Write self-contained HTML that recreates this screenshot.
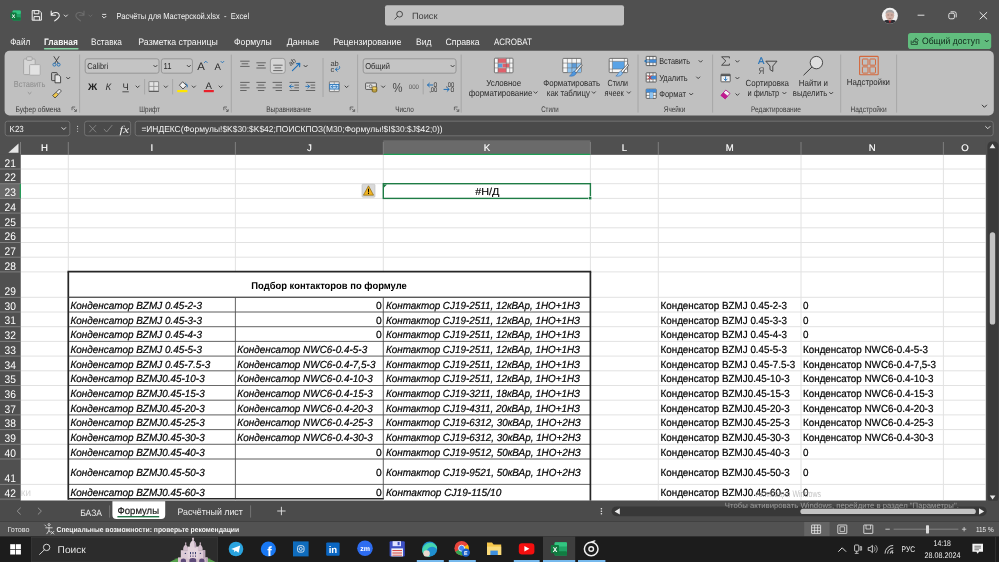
<!DOCTYPE html>
<html lang="ru">
<head>
<meta charset="utf-8">
<title>Расчёты для Мастерской.xlsx - Excel</title>
<style>
html,body{margin:0;padding:0;background:#505050;overflow:hidden}
#app{position:relative;width:999px;height:562px;overflow:hidden;font-family:'Liberation Sans', sans-serif}
svg{display:block;font-family:'Liberation Sans', sans-serif;will-change:transform}
text{white-space:pre;text-rendering:geometricPrecision}
</style>
</head>
<body>
<div id="app">
<svg width="999" height="562" viewBox="0 0 999 562">
<g id="backgrounds">
<rect x="0" y="0" width="999" height="562" fill="#505050"/>
</g>
<g id="titlebar">
<rect x="12.6" y="10.6" width="8.2" height="10" fill="#21a366" rx="1"/>
<rect x="12.6" y="10.6" width="8.2" height="3.4" fill="#33c481" rx="1"/>
<rect x="12.6" y="17.2" width="8.2" height="3.4" fill="#107c41" rx="1"/>
<rect x="10.3" y="12.6" width="6.3" height="6.3" fill="#0f7a3f" rx="0.8"/>
<text x="13.45" y="17.9" font-size="5.2" fill="#fff" font-weight="bold" text-anchor="middle">X</text>
<path d="M32.2 10.6 h7.0 l2.2 2.2 v7.4 h-9.2 Z M34.2 10.6 v3.2 h4.6 v-3.2 M34.0 20.2 v-3.6 h5.6 v3.6" fill="none" stroke="#f2f2f2" stroke-width="1.0" stroke-linejoin="round"/>
<path d="M51.2 11.0 v4.3 h4.3 M51.4 15.1 c1.4 -3.4 7.6 -3.6 7.9 0.6 c0.1 2.0 -2.2 3.4 -4.6 5.2" fill="none" stroke="#f2f2f2" stroke-width="1.05" stroke-linecap="round" stroke-linejoin="round"/>
<path d="M64.2 15.0 l1.6 1.6 l1.6 -1.6" fill="none" stroke="#f2f2f2" stroke-width="0.9" stroke-linecap="round" stroke-linejoin="round"/>
<path d="M84.0 11.0 v4.3 h-4.3 M83.8 15.1 c-1.4 -3.4 -7.6 -3.6 -7.9 0.6 c-0.1 2.0 2.2 3.4 4.6 5.2" fill="none" stroke="#6d6d6d" stroke-width="1.05" stroke-linecap="round" stroke-linejoin="round"/>
<path d="M88.8 15.0 l1.6 1.6 l1.6 -1.6" fill="none" stroke="#6d6d6d" stroke-width="0.9" stroke-linecap="round" stroke-linejoin="round"/>
<line x1="102.2" y1="14.4" x2="106.2" y2="14.4" stroke="#f2f2f2" stroke-width="0.9"/>
<path d="M102.4 16.3 l1.8 1.8 l1.8 -1.8" fill="none" stroke="#f2f2f2" stroke-width="0.9" stroke-linecap="round" stroke-linejoin="round"/>
<text x="116.6" y="18.9" font-size="8.6" fill="#f4f4f4" textLength="132.5" lengthAdjust="spacingAndGlyphs">Расчёты для Мастерской.xlsx  -  Excel</text>
<rect x="385" y="5.2" width="239" height="20.4" fill="#c0c0c0" rx="2"/>
<circle cx="399.6" cy="14.2" r="2.9" fill="none" stroke="#3c3c3c" stroke-width="0.9"/>
<line x1="397.5" y1="16.4" x2="394.8" y2="19.2" stroke="#3c3c3c" stroke-width="0.9" stroke-linecap="round"/>
<text x="411.9" y="18.6" font-size="9.0" fill="#404040" textLength="25.6" lengthAdjust="spacingAndGlyphs">Поиск</text>
<circle cx="889.9" cy="15.8" r="8.0" fill="#f1f1f1"/>
<clipPath id="avc"><circle cx="889.9" cy="15.8" r="8.0"/></clipPath>
<g clip-path="url(#avc)"><path d="M882 25 c0.4 -4.6 3.4 -5.2 7.9 -5.2 c4.5 0 7.5 0.6 7.9 5.2 Z" fill="#2e2e34"/><path d="M888.6 20.4 l1.3 3.4 l1.3 -3.4 Z" fill="#b3262e"/><ellipse cx="889.9" cy="15.2" rx="4.3" ry="5.2" fill="#cfaea3"/><path d="M885.5 14.0 c-0.2 -5.6 9.0 -5.6 8.8 0 c-1.6 -2.4 -7.2 -2.4 -8.8 0Z" fill="#a9a6a6"/><path d="M887.4 15.0 h1.8 M890.8 15.0 h1.8 M888.6 18.4 h2.6" stroke="#7d5f58" stroke-width="0.6" fill="none"/></g>
<line x1="917.6" y1="15.2" x2="924.4" y2="15.2" stroke="#f2f2f2" stroke-width="0.9"/>
<rect x="948.8" y="13.2" width="5.6" height="5.6" fill="none" rx="1.4" stroke="#f2f2f2" stroke-width="0.9"/>
<path d="M950.6 11.8 h3.8 a1.8 1.8 0 0 1 1.8 1.8 v3.8" fill="none" stroke="#f2f2f2" stroke-width="0.9" />
<path d="M980.0 12.4 l6.8 6.6 M986.8 12.4 l-6.8 6.6" fill="none" stroke="#f2f2f2" stroke-width="0.95" stroke-linecap="round"/>
</g>
<g id="tabs">
<text x="10.2" y="45.2" font-size="9.3" fill="#f6f6f6" textLength="20.0" lengthAdjust="spacingAndGlyphs">Файл</text>
<text x="43.9" y="45.2" font-size="9.3" fill="#f6f6f6" font-weight="bold" textLength="33.9" lengthAdjust="spacingAndGlyphs">Главная</text>
<text x="91.1" y="45.2" font-size="9.3" fill="#f6f6f6" textLength="30.9" lengthAdjust="spacingAndGlyphs">Вставка</text>
<text x="138.3" y="45.2" font-size="9.3" fill="#f6f6f6" textLength="79.5" lengthAdjust="spacingAndGlyphs">Разметка страницы</text>
<text x="234.0" y="45.2" font-size="9.3" fill="#f6f6f6" textLength="37.7" lengthAdjust="spacingAndGlyphs">Формулы</text>
<text x="286.7" y="45.2" font-size="9.3" fill="#f6f6f6" textLength="32.5" lengthAdjust="spacingAndGlyphs">Данные</text>
<text x="333.2" y="45.2" font-size="9.3" fill="#f6f6f6" textLength="68.3" lengthAdjust="spacingAndGlyphs">Рецензирование</text>
<text x="416.0" y="45.2" font-size="9.3" fill="#f6f6f6" textLength="15.5" lengthAdjust="spacingAndGlyphs">Вид</text>
<text x="445.4" y="45.2" font-size="9.3" fill="#f6f6f6" textLength="34.2" lengthAdjust="spacingAndGlyphs">Справка</text>
<text x="493.9" y="45.2" font-size="9.3" fill="#f6f6f6" textLength="38.1" lengthAdjust="spacingAndGlyphs">ACROBAT</text>
<rect x="43.9" y="47.9" width="34.7" height="1.5" fill="#86d3a3" rx="0.7"/>
<rect x="908.0" y="33.0" width="83.2" height="16.0" fill="#61bd7e" rx="2.8"/>
<path d="M911.2 40.6 v3.8 h6.2 v-2.2 M912.8 42.8 c0.2 -2.4 1.6 -3.2 3.0 -3.2 v-1.6 l2.6 2.4 l-2.6 2.4 v-1.6 c-1.4 0 -2.4 0.4 -3.0 1.6 Z" fill="none" stroke="#1c3a27" stroke-width="0.8" stroke-linejoin="round"/>
<text x="922.0" y="44.4" font-size="9.2" fill="#10281a" textLength="57.8" lengthAdjust="spacingAndGlyphs">Общий доступ</text>
<path d="M985.2 40.4 l1.5 1.5 l1.5 -1.5" fill="none" stroke="#10281a" stroke-width="0.9" stroke-linecap="round" stroke-linejoin="round"/>
</g>
<g id="ribbon">
<rect x="4.6" y="50.8" width="989.2" height="64.6" fill="#c0c0c0" rx="5"/>
<line x1="79.6" y1="54.6" x2="79.6" y2="112.6" stroke="#a0a0a0" stroke-width="0.8"/>
<line x1="231.3" y1="54.6" x2="231.3" y2="112.6" stroke="#a0a0a0" stroke-width="0.8"/>
<line x1="357.6" y1="54.6" x2="357.6" y2="112.6" stroke="#a0a0a0" stroke-width="0.8"/>
<line x1="461.2" y1="54.6" x2="461.2" y2="112.6" stroke="#a0a0a0" stroke-width="0.8"/>
<line x1="638.0" y1="54.6" x2="638.0" y2="112.6" stroke="#a0a0a0" stroke-width="0.8"/>
<line x1="712.6" y1="54.6" x2="712.6" y2="112.6" stroke="#a0a0a0" stroke-width="0.8"/>
<line x1="840.7" y1="54.6" x2="840.7" y2="112.6" stroke="#a0a0a0" stroke-width="0.8"/>
<line x1="896.6" y1="54.6" x2="896.6" y2="112.6" stroke="#a0a0a0" stroke-width="0.8"/>
<rect x="23.6" y="59.0" width="11.6" height="15.6" fill="#d6d6d6" rx="1" stroke="#a2a2a2" stroke-width="0.9"/>
<rect x="26.6" y="56.8" width="5.6" height="3.6" fill="#d0d0d0" rx="1" stroke="#a2a2a2" stroke-width="0.9"/>
<rect x="29.6" y="64.6" width="10.6" height="10.6" fill="#e2e2e2" rx="0.8" stroke="#a8a8a8" stroke-width="0.9"/>
<text x="13.8" y="87.4" font-size="8.6" fill="#8c8c8c" textLength="31.6" lengthAdjust="spacingAndGlyphs">Вставить</text>
<path d="M28.1 92.45 l1.5 1.5 l1.5 -1.5" fill="none" stroke="#8c8c8c" stroke-width="0.9" stroke-linecap="round" stroke-linejoin="round"/>
<path d="M54.0 56.6 l4.2 6.6 M59.0 56.6 l-4.2 6.6" fill="none" stroke="#3a3a3a" stroke-width="0.9" stroke-linecap="round"/>
<circle cx="54.4" cy="64.6" r="1.5" fill="none" stroke="#1e6fb8" stroke-width="0.9"/><circle cx="58.6" cy="64.6" r="1.5" fill="none" stroke="#1e6fb8" stroke-width="0.9"/>
<rect x="51.6" y="72.6" width="5.6" height="8.0" fill="none" rx="0.6" stroke="#3a3a3a" stroke-width="0.9"/>
<path d="M55.0 74.8 h3.6 l2.0 2.0 v6.0 h-5.6 Z" fill="#e6e6e6" stroke="#3a3a3a" stroke-width="0.9" stroke-linejoin="round"/>
<path d="M66.60000000000001 77.4 l1.6 1.6 l1.6 -1.6" fill="none" stroke="#333" stroke-width="0.9" stroke-linecap="round" stroke-linejoin="round"/>
<path d="M52.6 95.4 l3.6 -3.2 l2.2 2.4 l-3.4 3.4 Z" fill="#f2c94c" stroke="#3a3a3a" stroke-width="0.8" stroke-linejoin="round"/>
<path d="M56.4 92.0 l3.0 -3.0 l2.0 2.0 l-3.0 3.2" fill="#e8e8e8" stroke="#3a3a3a" stroke-width="0.8" stroke-linejoin="round"/>
<text x="15.6" y="111.6" font-size="8.1" fill="#3b3b3b" textLength="45.2" lengthAdjust="spacingAndGlyphs">Буфер обмена</text>
<path d="M72.0 110.2 v-3.2 h3.2" fill="none" stroke="#444" stroke-width="0.7" />
<path d="M73.6 108.6 l2.6 2.6 M76.4 109.2 v2.2 h-2.2" fill="none" stroke="#444" stroke-width="0.7" />
<rect x="85.2" y="58.8" width="73.8" height="14.4" fill="#c4c4c4" rx="2.2" stroke="#8c8c8c" stroke-width="0.8"/>
<text x="87.2" y="69.4" font-size="8.6" fill="#2b2b2b" textLength="21.0" lengthAdjust="spacingAndGlyphs">Calibri</text>
<path d="M153.8 65.4 l1.6 1.6 l1.6 -1.6" fill="none" stroke="#333" stroke-width="0.9" stroke-linecap="round" stroke-linejoin="round"/>
<rect x="161.4" y="58.8" width="31.0" height="14.4" fill="#c4c4c4" rx="2.2" stroke="#8c8c8c" stroke-width="0.8"/>
<text x="163.6" y="69.4" font-size="8.6" fill="#2b2b2b" textLength="8.0" lengthAdjust="spacingAndGlyphs">11</text>
<path d="M187.20000000000002 65.4 l1.6 1.6 l1.6 -1.6" fill="none" stroke="#333" stroke-width="0.9" stroke-linecap="round" stroke-linejoin="round"/>
<text x="197.2" y="70.2" font-size="11.0" fill="#2b2b2b" textLength="7.6" lengthAdjust="spacingAndGlyphs">A</text>
<path d="M204.4 62.6 l1.4 -1.4 l1.4 1.4" fill="none" stroke="#1e6fb8" stroke-width="0.9" stroke-linecap="round" stroke-linejoin="round"/>
<text x="214.6" y="70.2" font-size="9.6" fill="#2b2b2b" textLength="6.4" lengthAdjust="spacingAndGlyphs">A</text>
<path d="M221.0 61.4 l1.4 1.4 l1.4 -1.4" fill="none" stroke="#1e6fb8" stroke-width="0.9" stroke-linecap="round" stroke-linejoin="round"/>
<text x="92.6" y="90.4" font-size="9.6" fill="#222" font-weight="bold" text-anchor="middle" textLength="9.2" lengthAdjust="spacingAndGlyphs">Ж</text>
<text x="108.4" y="90.4" font-size="9.6" fill="#333" font-style="italic" text-anchor="middle">К</text>
<text x="125.6" y="90.0" font-size="9.4" fill="#333" text-anchor="middle">Ч</text>
<line x1="122.4" y1="91.8" x2="128.8" y2="91.8" stroke="#333" stroke-width="0.8"/>
<path d="M136.0 86.0 l1.6 1.6 l1.6 -1.6" fill="none" stroke="#333" stroke-width="0.9" stroke-linecap="round" stroke-linejoin="round"/>
<line x1="144.6" y1="79.0" x2="144.6" y2="94.4" stroke="#a0a0a0" stroke-width="0.8"/>
<rect x="149.0" y="81.6" width="9.6" height="9.6" fill="#e2e2e2" rx="0.4" stroke="#707070" stroke-width="0.7"/>
<line x1="153.8" y1="81.6" x2="153.8" y2="91.2" stroke="#8a8a8a" stroke-width="0.8"/>
<line x1="149.0" y1="86.4" x2="158.6" y2="86.4" stroke="#8a8a8a" stroke-width="0.8"/>
<line x1="148.8" y1="91.4" x2="158.8" y2="91.4" stroke="#4a4a4a" stroke-width="0.9"/>
<path d="M164.20000000000002 86.0 l1.6 1.6 l1.6 -1.6" fill="none" stroke="#333" stroke-width="0.9" stroke-linecap="round" stroke-linejoin="round"/>
<line x1="172.6" y1="79.0" x2="172.6" y2="94.4" stroke="#a0a0a0" stroke-width="0.8"/>
<path d="M179.4 85.2 l3.2 -3.4 l3.8 3.6 l-3.4 3.6 Z" fill="#f0f0f0" stroke="#3a3a3a" stroke-width="0.85" stroke-linejoin="round"/>
<path d="M185.6 83.2 c1.6 1.2 2.0 2.4 1.6 3.8" fill="none" stroke="#1e6fb8" stroke-width="1.0" stroke-linecap="round"/>
<rect x="177.2" y="90.0" width="10.2" height="2.2" fill="#ffe600"/>
<path d="M192.20000000000002 86.0 l1.6 1.6 l1.6 -1.6" fill="none" stroke="#333" stroke-width="0.9" stroke-linecap="round" stroke-linejoin="round"/>
<text x="208.8" y="88.8" font-size="9.6" fill="#2b2b2b" text-anchor="middle">A</text>
<rect x="203.8" y="90.0" width="10.0" height="2.2" fill="#e8212b"/>
<path d="M219.0 86.0 l1.6 1.6 l1.6 -1.6" fill="none" stroke="#333" stroke-width="0.9" stroke-linecap="round" stroke-linejoin="round"/>
<text x="139.2" y="111.6" font-size="8.1" fill="#3b3b3b" textLength="20.6" lengthAdjust="spacingAndGlyphs">Шрифт</text>
<path d="M223.8 110.2 v-3.2 h3.2" fill="none" stroke="#444" stroke-width="0.7" />
<path d="M225.4 108.6 l2.6 2.6 M228.20000000000002 109.2 v2.2 h-2.2" fill="none" stroke="#444" stroke-width="0.7" />
<line x1="240.2" y1="61.2" x2="249.6" y2="61.2" stroke="#585858" stroke-width="0.9"/>
<line x1="241.6" y1="63.800000000000004" x2="248.2" y2="63.800000000000004" stroke="#585858" stroke-width="0.9"/>
<line x1="240.2" y1="66.4" x2="249.6" y2="66.4" stroke="#585858" stroke-width="0.9"/>
<line x1="256.4" y1="62.8" x2="265.79999999999995" y2="62.8" stroke="#585858" stroke-width="0.9"/>
<line x1="257.79999999999995" y1="65.39999999999999" x2="264.4" y2="65.39999999999999" stroke="#585858" stroke-width="0.9"/>
<line x1="256.4" y1="68.0" x2="265.79999999999995" y2="68.0" stroke="#585858" stroke-width="0.9"/>
<rect x="270.4" y="58.4" width="14.8" height="15.0" fill="#d4d4d4" rx="2.6" stroke="#8e8e8e" stroke-width="0.8"/>
<line x1="273.2" y1="65.2" x2="282.59999999999997" y2="65.2" stroke="#585858" stroke-width="0.9"/>
<line x1="274.59999999999997" y1="67.9" x2="281.2" y2="67.9" stroke="#585858" stroke-width="0.9"/>
<line x1="273.2" y1="70.60000000000001" x2="282.59999999999997" y2="70.60000000000001" stroke="#585858" stroke-width="0.9"/>
<text transform="translate(290.6 66.2) rotate(-38)" font-size="6.8" fill="#3a3a3a">ab</text>
<path d="M292.4 70.6 l7.4 -7.2 M299.8 63.4 l-3.2 0.2 M299.8 63.4 l-0.2 3.2" fill="none" stroke="#1e6fb8" stroke-width="1.1" stroke-linecap="round"/>
<path d="M304.0 65.4 l1.6 1.6 l1.6 -1.6" fill="none" stroke="#333" stroke-width="0.9" stroke-linecap="round" stroke-linejoin="round"/>
<line x1="240.2" y1="82.4" x2="249.6" y2="82.4" stroke="#585858" stroke-width="0.9"/>
<line x1="240.2" y1="85.10000000000001" x2="246.6" y2="85.10000000000001" stroke="#585858" stroke-width="0.9"/>
<line x1="240.2" y1="87.80000000000001" x2="249.6" y2="87.80000000000001" stroke="#585858" stroke-width="0.9"/>
<line x1="240.2" y1="90.5" x2="246.6" y2="90.5" stroke="#585858" stroke-width="0.9"/>
<line x1="256.4" y1="82.4" x2="265.79999999999995" y2="82.4" stroke="#585858" stroke-width="0.9"/>
<line x1="257.9" y1="85.10000000000001" x2="264.29999999999995" y2="85.10000000000001" stroke="#585858" stroke-width="0.9"/>
<line x1="256.4" y1="87.80000000000001" x2="265.79999999999995" y2="87.80000000000001" stroke="#585858" stroke-width="0.9"/>
<line x1="257.9" y1="90.5" x2="264.29999999999995" y2="90.5" stroke="#585858" stroke-width="0.9"/>
<line x1="272.6" y1="82.4" x2="282.0" y2="82.4" stroke="#585858" stroke-width="0.9"/>
<line x1="275.6" y1="85.10000000000001" x2="282.0" y2="85.10000000000001" stroke="#585858" stroke-width="0.9"/>
<line x1="272.6" y1="87.80000000000001" x2="282.0" y2="87.80000000000001" stroke="#585858" stroke-width="0.9"/>
<line x1="275.6" y1="90.5" x2="282.0" y2="90.5" stroke="#585858" stroke-width="0.9"/>
<line x1="289.6" y1="82.4" x2="299.0" y2="82.4" stroke="#585858" stroke-width="0.9"/>
<line x1="294.4" y1="85.10000000000001" x2="299.0" y2="85.10000000000001" stroke="#585858" stroke-width="0.9"/>
<line x1="294.4" y1="87.80000000000001" x2="299.0" y2="87.80000000000001" stroke="#585858" stroke-width="0.9"/>
<line x1="289.6" y1="90.5" x2="299.0" y2="90.5" stroke="#585858" stroke-width="0.9"/>
<path d="M293.2 86.4 h-3.6 M291.2 84.8 l-1.7 1.6 l1.7 1.6" fill="none" stroke="#1e6fb8" stroke-width="0.9" stroke-linecap="round" stroke-linejoin="round"/>
<line x1="305.8" y1="82.4" x2="315.2" y2="82.4" stroke="#585858" stroke-width="0.9"/>
<line x1="310.59999999999997" y1="85.10000000000001" x2="315.2" y2="85.10000000000001" stroke="#585858" stroke-width="0.9"/>
<line x1="310.59999999999997" y1="87.80000000000001" x2="315.2" y2="87.80000000000001" stroke="#585858" stroke-width="0.9"/>
<line x1="305.8" y1="90.5" x2="315.2" y2="90.5" stroke="#585858" stroke-width="0.9"/>
<path d="M305.8 86.4 h3.6 M307.8 84.8 l1.7 1.6 l-1.7 1.6" fill="none" stroke="#1e6fb8" stroke-width="0.9" stroke-linecap="round" stroke-linejoin="round"/>
<line x1="323.0" y1="58.0" x2="323.0" y2="97.0" stroke="#a0a0a0" stroke-width="0.8"/>
<text x="330.4" y="66.4" font-size="7.4" fill="#3a3a3a" textLength="8.4" lengthAdjust="spacingAndGlyphs">ab</text>
<text x="330.4" y="71.6" font-size="7.4" fill="#3a3a3a">c</text>
<path d="M339.6 66.6 c0.6 2.0 -0.6 2.8 -2.2 2.8 h-1.8 M337.2 67.6 l-1.9 1.8 l1.9 1.8" fill="none" stroke="#1e6fb8" stroke-width="0.9" stroke-linecap="round" stroke-linejoin="round"/>
<rect x="329.4" y="81.8" width="9.8" height="9.8" fill="#e8e8e8" rx="0.4" stroke="#6a6a6a" stroke-width="0.8"/>
<line x1="334.3" y1="81.8" x2="334.3" y2="91.6" stroke="#8a8a8a" stroke-width="0.7"/>
<rect x="329.8" y="84.4" width="9.0" height="4.6" fill="#d3e8fb" stroke="#1e6fb8" stroke-width="0.9"/>
<path d="M331.4 86.7 h5.8 M332.8 85.5 l-1.4 1.2 l1.4 1.2 M335.8 85.5 l1.4 1.2 l-1.4 1.2" fill="none" stroke="#1e6fb8" stroke-width="0.8" stroke-linecap="round"/>
<path d="M345.0 86.0 l1.6 1.6 l1.6 -1.6" fill="none" stroke="#333" stroke-width="0.9" stroke-linecap="round" stroke-linejoin="round"/>
<text x="266.2" y="111.6" font-size="8.1" fill="#3b3b3b" textLength="45.0" lengthAdjust="spacingAndGlyphs">Выравнивание</text>
<path d="M350.2 110.2 v-3.2 h3.2" fill="none" stroke="#444" stroke-width="0.7" />
<path d="M351.8 108.6 l2.6 2.6 M354.59999999999997 109.2 v2.2 h-2.2" fill="none" stroke="#444" stroke-width="0.7" />
<rect x="363.2" y="58.8" width="92.8" height="14.4" fill="#c4c4c4" rx="2.2" stroke="#8c8c8c" stroke-width="0.8"/>
<text x="365.2" y="69.4" font-size="8.6" fill="#2b2b2b" textLength="24.8" lengthAdjust="spacingAndGlyphs">Общий</text>
<path d="M451.0 65.4 l1.6 1.6 l1.6 -1.6" fill="none" stroke="#333" stroke-width="0.9" stroke-linecap="round" stroke-linejoin="round"/>
<rect x="365.6" y="83.0" width="10.8" height="6.4" fill="#dedede" rx="0.6" stroke="#4a4a4a" stroke-width="0.9"/>
<circle cx="370.6" cy="86.2" r="1.5" fill="none" stroke="#4a4a4a" stroke-width="0.7"/>
<line x1="366.8" y1="86.2" x2="368.0" y2="86.2" stroke="#4a4a4a" stroke-width="0.7"/>
<path d="M372.2 87.6 a2.3 0.9 0 0 1 4.6 0 v3.6 a2.3 0.9 0 0 1 -4.6 0 Z" fill="#f4d36b" stroke="#5a4500" stroke-width="0.7" />
<path d="M372.2 89.0 a2.3 0.9 0 0 0 4.6 0 M372.2 90.2 a2.3 0.9 0 0 0 4.6 0" fill="none" stroke="#5a4500" stroke-width="0.5" />
<path d="M381.59999999999997 86.0 l1.6 1.6 l1.6 -1.6" fill="none" stroke="#333" stroke-width="0.9" stroke-linecap="round" stroke-linejoin="round"/>
<text x="397.6" y="91.6" font-size="13.0" fill="#4a4a4a" text-anchor="middle" textLength="10.0" lengthAdjust="spacingAndGlyphs">%</text>
<text x="413.9" y="89.2" font-size="6.6" fill="#5a5a5a" text-anchor="middle" textLength="10.2" lengthAdjust="spacingAndGlyphs">000</text>
<line x1="423.2" y1="79.0" x2="423.2" y2="94.4" stroke="#a0a0a0" stroke-width="0.8"/>
<path d="M432.6 85.0 h-5.0 M429.4 83.2 l-1.9 1.8 l1.9 1.8" fill="none" stroke="#1e6fb8" stroke-width="1.0" stroke-linecap="round" stroke-linejoin="round"/>
<text x="433.4" y="87.0" font-size="6.9" fill="#3a3a3a" textLength="3.8" lengthAdjust="spacingAndGlyphs">0</text>
<text x="429.2" y="91.8" font-size="6.9" fill="#3a3a3a" textLength="8.2" lengthAdjust="spacingAndGlyphs">,00</text>
<path d="M444.0 89.4 h5.0 M447.2 87.6 l1.9 1.8 l-1.9 1.8" fill="none" stroke="#1e6fb8" stroke-width="1.0" stroke-linecap="round" stroke-linejoin="round"/>
<text x="446.0" y="87.0" font-size="6.9" fill="#3a3a3a" textLength="8.2" lengthAdjust="spacingAndGlyphs">,00</text>
<text x="450.4" y="91.8" font-size="6.9" fill="#3a3a3a" textLength="3.8" lengthAdjust="spacingAndGlyphs">0</text>
<text x="395.2" y="111.6" font-size="8.1" fill="#3b3b3b" textLength="18.6" lengthAdjust="spacingAndGlyphs">Число</text>
<path d="M454.4 110.2 v-3.2 h3.2" fill="none" stroke="#444" stroke-width="0.7" />
<path d="M456.0 108.6 l2.6 2.6 M458.79999999999995 109.2 v2.2 h-2.2" fill="none" stroke="#444" stroke-width="0.7" />
<rect x="494.4" y="58.2" width="18.6" height="14.6" fill="#f6f6f6" rx="0.8" stroke="#5a5a5a" stroke-width="0.8"/>
<rect x="498.0" y="58.6" width="8.2" height="4.2" fill="#e0606b"/>
<rect x="498.0" y="63.6" width="4.6" height="3.8" fill="#5b9bd9"/>
<rect x="502.6" y="63.6" width="6.8" height="3.8" fill="#e0606b"/>
<rect x="498.0" y="68.2" width="8.2" height="4.2" fill="#e0606b"/>
<line x1="498.0" y1="58.2" x2="498.0" y2="72.8" stroke="#666" stroke-width="0.55"/>
<line x1="506.3" y1="58.2" x2="506.3" y2="72.8" stroke="#666" stroke-width="0.55"/>
<line x1="509.7" y1="58.2" x2="509.7" y2="72.8" stroke="#666" stroke-width="0.55"/>
<line x1="494.4" y1="63.1" x2="513.0" y2="63.1" stroke="#666" stroke-width="0.55"/>
<line x1="494.4" y1="67.9" x2="513.0" y2="67.9" stroke="#666" stroke-width="0.55"/>
<text x="486.2" y="86.0" font-size="8.8" fill="#2b2b2b" textLength="35.0" lengthAdjust="spacingAndGlyphs">Условное</text>
<text x="468.8" y="95.8" font-size="8.8" fill="#2b2b2b" textLength="63.6" lengthAdjust="spacingAndGlyphs">форматирование</text>
<path d="M534.0 91.8 l1.6 1.6 l1.6 -1.6" fill="none" stroke="#333" stroke-width="0.9" stroke-linecap="round" stroke-linejoin="round"/>
<rect x="562.8" y="58.4" width="18.4" height="14.2" fill="#f6f6f6" rx="0.8" stroke="#5a5a5a" stroke-width="0.8"/>
<rect x="567.4" y="63.2" width="13.6" height="9.2" fill="#8cc3f2"/>
<rect x="571.9" y="63.2" width="4.6" height="4.6" fill="#5b9bd9"/>
<line x1="567.4" y1="58.4" x2="567.4" y2="72.6" stroke="#666" stroke-width="0.55"/>
<line x1="571.9" y1="58.4" x2="571.9" y2="72.6" stroke="#666" stroke-width="0.55"/>
<line x1="576.5" y1="58.4" x2="576.5" y2="72.6" stroke="#666" stroke-width="0.55"/>
<line x1="562.8" y1="63.1" x2="581.2" y2="63.1" stroke="#666" stroke-width="0.55"/>
<line x1="562.8" y1="67.9" x2="581.2" y2="67.9" stroke="#666" stroke-width="0.55"/>
<path d="M581.1999999999999 63.99999999999999 l1.2 1.0 l-6.2 7.8 l-1.8 -1.4 Z" fill="#f4f4f4" stroke="#444" stroke-width="0.7" stroke-linejoin="round"/>
<path d="M574.1999999999999 71.19999999999999 l2.0 1.6 c-0.4 2.6 -3.4 4.0 -6.8 3.2 c2.2 -0.8 2.2 -3.8 4.8 -4.8 Z" fill="#4f97de" stroke="#2d64a8" stroke-width="0.5" />
<text x="543.2" y="86.0" font-size="8.8" fill="#2b2b2b" textLength="56.8" lengthAdjust="spacingAndGlyphs">Форматировать</text>
<text x="546.8" y="95.8" font-size="8.8" fill="#2b2b2b" textLength="43.2" lengthAdjust="spacingAndGlyphs">как таблицу</text>
<path d="M592.1999999999999 91.8 l1.6 1.6 l1.6 -1.6" fill="none" stroke="#333" stroke-width="0.9" stroke-linecap="round" stroke-linejoin="round"/>
<rect x="609.2" y="58.4" width="18.4" height="14.2" fill="#f6f6f6" rx="0.8" stroke="#5a5a5a" stroke-width="0.8"/>
<rect x="612.4" y="61.4" width="12.0" height="7.6" fill="#5aa3e6"/>
<line x1="612.4" y1="58.4" x2="612.4" y2="72.6" stroke="#666" stroke-width="0.55"/>
<line x1="624.4" y1="58.4" x2="624.4" y2="72.6" stroke="#666" stroke-width="0.55"/>
<line x1="609.2" y1="61.3" x2="627.6" y2="61.3" stroke="#666" stroke-width="0.55"/>
<line x1="609.2" y1="69.1" x2="627.6" y2="69.1" stroke="#666" stroke-width="0.55"/>
<path d="M627.5999999999999 63.99999999999999 l1.2 1.0 l-6.2 7.8 l-1.8 -1.4 Z" fill="#f4f4f4" stroke="#444" stroke-width="0.7" stroke-linejoin="round"/>
<path d="M620.5999999999999 71.19999999999999 l2.0 1.6 c-0.4 2.6 -3.4 4.0 -6.8 3.2 c2.2 -0.8 2.2 -3.8 4.8 -4.8 Z" fill="#8cc3f2" stroke="#2d64a8" stroke-width="0.5" />
<text x="607.6" y="86.0" font-size="8.8" fill="#2b2b2b" textLength="20.4" lengthAdjust="spacingAndGlyphs">Стили</text>
<text x="604.6" y="95.8" font-size="8.8" fill="#2b2b2b" textLength="19.2" lengthAdjust="spacingAndGlyphs">ячеек</text>
<path d="M627.1999999999999 91.8 l1.6 1.6 l1.6 -1.6" fill="none" stroke="#333" stroke-width="0.9" stroke-linecap="round" stroke-linejoin="round"/>
<text x="541.2" y="111.6" font-size="8.1" fill="#3b3b3b" textLength="17.6" lengthAdjust="spacingAndGlyphs">Стили</text>
<rect x="646.2" y="56.4" width="10.0" height="9.2" fill="#f4f4f4" rx="0.5" stroke="#444" stroke-width="0.8"/>
<line x1="646.2" y1="59.6" x2="656.2" y2="59.6" stroke="#444" stroke-width="0.6"/>
<line x1="646.2" y1="62.6" x2="656.2" y2="62.6" stroke="#444" stroke-width="0.6"/>
<line x1="649.6" y1="56.4" x2="649.6" y2="65.6" stroke="#444" stroke-width="0.6"/>
<line x1="653.0" y1="56.4" x2="653.0" y2="65.6" stroke="#444" stroke-width="0.6"/>
<rect x="649.6" y="59.6" width="6.6" height="3.0" fill="#3f8ad8"/>
<path d="M649.2 61.1 h-4.4 M646.6 59.6 l-1.8 1.5 l1.8 1.5" fill="none" stroke="#1e6fb8" stroke-width="0.9" stroke-linecap="round"/>
<text x="659.2" y="64.4" font-size="8.8" fill="#2b2b2b" textLength="30.8" lengthAdjust="spacingAndGlyphs">Вставить</text>
<path d="M699.0 60.6 l1.6 1.6 l1.6 -1.6" fill="none" stroke="#333" stroke-width="0.9" stroke-linecap="round" stroke-linejoin="round"/>
<rect x="646.2" y="72.8" width="10.0" height="9.2" fill="#f4f4f4" rx="0.5" stroke="#444" stroke-width="0.8"/>
<line x1="646.2" y1="76.0" x2="656.2" y2="76.0" stroke="#444" stroke-width="0.6"/>
<line x1="646.2" y1="79.0" x2="656.2" y2="79.0" stroke="#444" stroke-width="0.6"/>
<line x1="649.6" y1="72.8" x2="649.6" y2="82.0" stroke="#444" stroke-width="0.6"/>
<line x1="653.0" y1="72.8" x2="653.0" y2="82.0" stroke="#444" stroke-width="0.6"/>
<rect x="649.6" y="76.0" width="6.6" height="3.0" fill="#3f8ad8"/>
<path d="M648.2 75.8 l3.2 3.4 M651.4000000000001 75.8 l-3.2 3.4" fill="none" stroke="#d42a2a" stroke-width="1.0" stroke-linecap="round"/>
<text x="659.2" y="80.8" font-size="8.8" fill="#2b2b2b" textLength="28.4" lengthAdjust="spacingAndGlyphs">Удалить</text>
<path d="M696.6 77.0 l1.6 1.6 l1.6 -1.6" fill="none" stroke="#333" stroke-width="0.9" stroke-linecap="round" stroke-linejoin="round"/>
<rect x="646.2" y="89.2" width="10.0" height="9.2" fill="#f4f4f4" rx="0.5" stroke="#444" stroke-width="0.8"/>
<line x1="646.2" y1="92.4" x2="656.2" y2="92.4" stroke="#444" stroke-width="0.6"/>
<line x1="646.2" y1="95.4" x2="656.2" y2="95.4" stroke="#444" stroke-width="0.6"/>
<line x1="649.6" y1="89.2" x2="649.6" y2="98.4" stroke="#444" stroke-width="0.6"/>
<line x1="653.0" y1="89.2" x2="653.0" y2="98.4" stroke="#444" stroke-width="0.6"/>
<rect x="646.2" y="89.2" width="10.0" height="3.2" fill="#3f8ad8"/>
<rect x="649.6" y="92.4" width="3.4" height="6.0" fill="#8cc3f2"/>
<text x="659.2" y="97.2" font-size="8.8" fill="#2b2b2b" textLength="26.8" lengthAdjust="spacingAndGlyphs">Формат</text>
<path d="M689.6 93.4 l1.6 1.6 l1.6 -1.6" fill="none" stroke="#333" stroke-width="0.9" stroke-linecap="round" stroke-linejoin="round"/>
<text x="663.8" y="111.6" font-size="8.1" fill="#3b3b3b" textLength="21.4" lengthAdjust="spacingAndGlyphs">Ячейки</text>
<path d="M729.4 58.4 v-1.6 h-7.8 l4.2 4.2 l-4.2 4.2 h7.8 v-1.6" fill="none" stroke="#3a3a3a" stroke-width="0.9" stroke-linejoin="round"/>
<path d="M735.8 60.6 l1.6 1.6 l1.6 -1.6" fill="none" stroke="#333" stroke-width="0.9" stroke-linecap="round" stroke-linejoin="round"/>
<rect x="721.0" y="74.2" width="9.2" height="7.6" fill="#f4f4f4" rx="0.5" stroke="#444" stroke-width="0.8"/>
<rect x="721.0" y="74.2" width="9.2" height="2.0" fill="#555"/>
<path d="M725.6 76.8 v3.6 M724.0 79.0 l1.6 1.6 l1.6 -1.6" fill="none" stroke="#1e6fb8" stroke-width="0.9" stroke-linecap="round" stroke-linejoin="round"/>
<path d="M735.8 77.4 l1.6 1.6 l1.6 -1.6" fill="none" stroke="#333" stroke-width="0.9" stroke-linecap="round" stroke-linejoin="round"/>
<path d="M721.0 95.4 l4.8 -5.4 l4.2 3.4 l-4.8 5.4 Z" fill="#f4f4f4" stroke="#b4188c" stroke-width="0.9" stroke-linejoin="round"/>
<path d="M721.0 95.4 l2.4 -2.7 l4.2 3.4 l-2.4 2.7 Z" fill="#c2188f" stroke="#b4188c" stroke-width="0.6" stroke-linejoin="round"/>
<path d="M735.8 93.8 l1.6 1.6 l1.6 -1.6" fill="none" stroke="#333" stroke-width="0.9" stroke-linecap="round" stroke-linejoin="round"/>
<text x="758.0" y="64.4" font-size="9.8" fill="#1e6fb8" stroke="#1e6fb8" stroke-width="0.2" textLength="6.4" lengthAdjust="spacingAndGlyphs">A</text>
<text x="758.4" y="73.7" font-size="9.6" fill="#4a4a4a" textLength="5.8" lengthAdjust="spacingAndGlyphs">Я</text>
<path d="M765.8 61.2 h11.2 l-4.2 4.8 v5.4 l-2.8 -1.8 v-3.6 Z" fill="none" stroke="#3a3a3a" stroke-width="0.9" stroke-linejoin="round"/>
<text x="745.6" y="85.8" font-size="8.8" fill="#2b2b2b" textLength="43.4" lengthAdjust="spacingAndGlyphs">Сортировка</text>
<text x="747.4" y="96.2" font-size="8.8" fill="#2b2b2b" textLength="31.8" lengthAdjust="spacingAndGlyphs">и фильтр</text>
<path d="M782.8 92.4 l1.6 1.6 l1.6 -1.6" fill="none" stroke="#333" stroke-width="0.9" stroke-linecap="round" stroke-linejoin="round"/>
<circle cx="816.4" cy="62.6" r="6.2" fill="#dedede" stroke="#3a3a3a" stroke-width="0.9"/>
<line x1="811.8" y1="67.2" x2="803.8" y2="75.0" stroke="#3a3a3a" stroke-width="1.0" stroke-linecap="round"/>
<text x="798.8" y="85.8" font-size="8.8" fill="#2b2b2b" textLength="29.2" lengthAdjust="spacingAndGlyphs">Найти и</text>
<text x="792.8" y="96.2" font-size="8.8" fill="#2b2b2b" textLength="34.4" lengthAdjust="spacingAndGlyphs">выделить</text>
<path d="M829.6 92.4 l1.6 1.6 l1.6 -1.6" fill="none" stroke="#333" stroke-width="0.9" stroke-linecap="round" stroke-linejoin="round"/>
<text x="751.0" y="111.6" font-size="8.1" fill="#3b3b3b" textLength="50.0" lengthAdjust="spacingAndGlyphs">Редактирование</text>
<rect x="859.6" y="56.4" width="18.6" height="18.4" fill="none" rx="0.8" stroke="#d4683c" stroke-width="1.1"/>
<rect x="862.4" y="59.0" width="5.6" height="6.2" fill="none" rx="0.5" stroke="#d4683c" stroke-width="1.0"/>
<rect x="869.9" y="59.0" width="5.6" height="6.2" fill="none" rx="0.5" stroke="#d4683c" stroke-width="1.0"/>
<rect x="862.4" y="66.9" width="5.6" height="6.2" fill="none" rx="0.5" stroke="#d4683c" stroke-width="1.0"/>
<rect x="869.9" y="66.9" width="5.6" height="6.2" fill="none" rx="0.5" stroke="#d4683c" stroke-width="1.0"/>
<text x="846.8" y="85.2" font-size="8.8" fill="#2b2b2b" textLength="43.2" lengthAdjust="spacingAndGlyphs">Надстройки</text>
<text x="850.4" y="111.6" font-size="8.1" fill="#3b3b3b" textLength="36.2" lengthAdjust="spacingAndGlyphs">Надстройки</text>
<path d="M982.1999999999999 105.10000000000001 l2.2 2.2 l2.2 -2.2" fill="none" stroke="#333" stroke-width="1.0" stroke-linecap="round" stroke-linejoin="round"/>
</g>
<g id="formulabar">
<rect x="5.2" y="121.2" width="64.6" height="14.6" fill="#4a4a4a" rx="2.4" stroke="#7a7a7a" stroke-width="0.8"/>
<text x="9.6" y="132.2" font-size="8.8" fill="#f4f4f4" textLength="14.2" lengthAdjust="spacingAndGlyphs">K23</text>
<path d="M61.9 127.64999999999999 l1.9 1.9 l1.9 -1.9" fill="none" stroke="#e8e8e8" stroke-width="0.9" stroke-linecap="round" stroke-linejoin="round"/>
<circle cx="77.6" cy="126.4" r="0.55" fill="#dcdcdc"/>
<circle cx="77.6" cy="128.8" r="0.55" fill="#dcdcdc"/>
<circle cx="77.6" cy="131.2" r="0.55" fill="#dcdcdc"/>
<rect x="84.6" y="121.2" width="46.0" height="14.6" fill="#4a4a4a" rx="2.4" stroke="#7a7a7a" stroke-width="0.8"/>
<path d="M89.6 125.4 l6.2 6.6 M95.8 125.4 l-6.2 6.6" fill="none" stroke="#8e8e8e" stroke-width="0.8" stroke-linecap="round"/>
<path d="M104.2 129.2 l2.4 2.8 l5.4 -6.6" fill="none" stroke="#8e8e8e" stroke-width="0.8" stroke-linecap="round" stroke-linejoin="round"/>
<text x="119.6" y="132.6" font-size="10.4" font-style="italic" fill="#f0f0f0" font-family="'Liberation Serif', serif" textLength="9.6" lengthAdjust="spacingAndGlyphs">fx</text>
<rect x="135.2" y="121.2" width="858.0" height="14.6" fill="#4a4a4a" rx="2.4" stroke="#7a7a7a" stroke-width="0.8"/>
<text x="141.4" y="132.0" font-size="8.6" fill="#f4f4f4" textLength="301.2" lengthAdjust="spacingAndGlyphs">=ИНДЕКС(Формулы!$K$30:$K$42;ПОИСКПОЗ(M30;Формулы!$I$30:$J$42;0))</text>
<path d="M985.5999999999999 126.5 l2.2 2.2 l2.2 -2.2" fill="none" stroke="#e8e8e8" stroke-width="0.9" stroke-linecap="round" stroke-linejoin="round"/>
</g>
<g id="grid">
<rect x="20.5" y="154.6" width="965.4" height="346.1" fill="#ffffff"/>
<line x1="68.3" y1="154.6" x2="68.3" y2="500.7" stroke="#e2e2e2" stroke-width="1"/>
<line x1="235.4" y1="154.6" x2="235.4" y2="500.7" stroke="#e2e2e2" stroke-width="1"/>
<line x1="383.3" y1="154.6" x2="383.3" y2="500.7" stroke="#e2e2e2" stroke-width="1"/>
<line x1="590.4" y1="154.6" x2="590.4" y2="500.7" stroke="#e2e2e2" stroke-width="1"/>
<line x1="658.3" y1="154.6" x2="658.3" y2="500.7" stroke="#e2e2e2" stroke-width="1"/>
<line x1="801.0" y1="154.6" x2="801.0" y2="500.7" stroke="#e2e2e2" stroke-width="1"/>
<line x1="943.4" y1="154.6" x2="943.4" y2="500.7" stroke="#e2e2e2" stroke-width="1"/>
<line x1="20.5" y1="169.0" x2="985.9" y2="169.0" stroke="#e2e2e2" stroke-width="1"/>
<line x1="20.5" y1="183.7" x2="985.9" y2="183.7" stroke="#e2e2e2" stroke-width="1"/>
<line x1="20.5" y1="198.39999999999998" x2="985.9" y2="198.39999999999998" stroke="#e2e2e2" stroke-width="1"/>
<line x1="20.5" y1="213.09999999999997" x2="985.9" y2="213.09999999999997" stroke="#e2e2e2" stroke-width="1"/>
<line x1="20.5" y1="227.79999999999995" x2="985.9" y2="227.79999999999995" stroke="#e2e2e2" stroke-width="1"/>
<line x1="20.5" y1="242.49999999999994" x2="985.9" y2="242.49999999999994" stroke="#e2e2e2" stroke-width="1"/>
<line x1="20.5" y1="257.19999999999993" x2="985.9" y2="257.19999999999993" stroke="#e2e2e2" stroke-width="1"/>
<line x1="20.5" y1="271.8999999999999" x2="985.9" y2="271.8999999999999" stroke="#e2e2e2" stroke-width="1"/>
<line x1="20.5" y1="297.2999999999999" x2="985.9" y2="297.2999999999999" stroke="#e2e2e2" stroke-width="1"/>
<line x1="20.5" y1="311.9999999999999" x2="985.9" y2="311.9999999999999" stroke="#e2e2e2" stroke-width="1"/>
<line x1="20.5" y1="326.6999999999999" x2="985.9" y2="326.6999999999999" stroke="#e2e2e2" stroke-width="1"/>
<line x1="20.5" y1="341.39999999999986" x2="985.9" y2="341.39999999999986" stroke="#e2e2e2" stroke-width="1"/>
<line x1="20.5" y1="356.09999999999985" x2="985.9" y2="356.09999999999985" stroke="#e2e2e2" stroke-width="1"/>
<line x1="20.5" y1="370.79999999999984" x2="985.9" y2="370.79999999999984" stroke="#e2e2e2" stroke-width="1"/>
<line x1="20.5" y1="385.49999999999983" x2="985.9" y2="385.49999999999983" stroke="#e2e2e2" stroke-width="1"/>
<line x1="20.5" y1="400.1999999999998" x2="985.9" y2="400.1999999999998" stroke="#e2e2e2" stroke-width="1"/>
<line x1="20.5" y1="414.8999999999998" x2="985.9" y2="414.8999999999998" stroke="#e2e2e2" stroke-width="1"/>
<line x1="20.5" y1="429.5999999999998" x2="985.9" y2="429.5999999999998" stroke="#e2e2e2" stroke-width="1"/>
<line x1="20.5" y1="444.2999999999998" x2="985.9" y2="444.2999999999998" stroke="#e2e2e2" stroke-width="1"/>
<line x1="20.5" y1="458.9999999999998" x2="985.9" y2="458.9999999999998" stroke="#e2e2e2" stroke-width="1"/>
<line x1="20.5" y1="484.39999999999975" x2="985.9" y2="484.39999999999975" stroke="#e2e2e2" stroke-width="1"/>
<rect x="0" y="140.5" width="985.9" height="14.099999999999994" fill="#505050"/>
<rect x="383.3" y="140.3" width="207.09999999999997" height="14.299999999999994" fill="#6a6a6a"/>
<line x1="383.3" y1="154.29999999999998" x2="590.4" y2="154.29999999999998" stroke="#1f9d55" stroke-width="1.2"/>
<text x="44.4" y="151.0" font-size="9.6" fill="#ffffff" stroke="#ffffff" stroke-width="0.15" text-anchor="middle">H</text>
<text x="151.85" y="151.0" font-size="9.6" fill="#ffffff" stroke="#ffffff" stroke-width="0.15" text-anchor="middle">I</text>
<line x1="68.3" y1="142.0" x2="68.3" y2="154.6" stroke="#8a8a8a" stroke-width="0.8"/>
<text x="309.35" y="151.0" font-size="9.6" fill="#ffffff" stroke="#ffffff" stroke-width="0.15" text-anchor="middle">J</text>
<line x1="235.4" y1="142.0" x2="235.4" y2="154.6" stroke="#8a8a8a" stroke-width="0.8"/>
<text x="486.85" y="151.0" font-size="9.6" fill="#ffffff" stroke="#ffffff" stroke-width="0.15" text-anchor="middle">K</text>
<line x1="383.3" y1="142.0" x2="383.3" y2="154.6" stroke="#8a8a8a" stroke-width="0.8"/>
<text x="624.3499999999999" y="151.0" font-size="9.6" fill="#ffffff" stroke="#ffffff" stroke-width="0.15" text-anchor="middle">L</text>
<line x1="590.4" y1="142.0" x2="590.4" y2="154.6" stroke="#8a8a8a" stroke-width="0.8"/>
<text x="729.65" y="151.0" font-size="9.6" fill="#ffffff" stroke="#ffffff" stroke-width="0.15" text-anchor="middle">M</text>
<line x1="658.3" y1="142.0" x2="658.3" y2="154.6" stroke="#8a8a8a" stroke-width="0.8"/>
<text x="872.2" y="151.0" font-size="9.6" fill="#ffffff" stroke="#ffffff" stroke-width="0.15" text-anchor="middle">N</text>
<line x1="801.0" y1="142.0" x2="801.0" y2="154.6" stroke="#8a8a8a" stroke-width="0.8"/>
<text x="964.95" y="151.0" font-size="9.6" fill="#ffffff" stroke="#ffffff" stroke-width="0.15" text-anchor="middle">O</text>
<line x1="943.4" y1="142.0" x2="943.4" y2="154.6" stroke="#8a8a8a" stroke-width="0.8"/>
<line x1="20.5" y1="142.0" x2="20.5" y2="154.6" stroke="#8a8a8a" stroke-width="0.8"/>
<path d="M18.5 143.5 L18.5 152.8 L8.3 152.8 Z" fill="#e6e6e6" />
<rect x="0" y="154.6" width="20.5" height="346.1" fill="#505050"/>
<rect x="0" y="183.7" width="20.5" height="14.699999999999989" fill="#6a6a6a"/>
<line x1="20.3" y1="183.7" x2="20.3" y2="198.39999999999998" stroke="#1f9d55" stroke-width="1.2"/>
<text x="10.3" y="166.7" font-size="11.0" fill="#ffffff" text-anchor="middle" textLength="11.4" lengthAdjust="spacingAndGlyphs">21</text>
<line x1="0" y1="169.0" x2="20.5" y2="169.0" stroke="#8a8a8a" stroke-width="0.8"/>
<text x="10.3" y="181.39999999999998" font-size="11.0" fill="#ffffff" text-anchor="middle" textLength="11.4" lengthAdjust="spacingAndGlyphs">22</text>
<line x1="0" y1="183.7" x2="20.5" y2="183.7" stroke="#8a8a8a" stroke-width="0.8"/>
<text x="10.3" y="196.09999999999997" font-size="11.0" fill="#ffffff" text-anchor="middle" textLength="11.4" lengthAdjust="spacingAndGlyphs">23</text>
<line x1="0" y1="198.39999999999998" x2="20.5" y2="198.39999999999998" stroke="#8a8a8a" stroke-width="0.8"/>
<text x="10.3" y="210.79999999999995" font-size="11.0" fill="#ffffff" text-anchor="middle" textLength="11.4" lengthAdjust="spacingAndGlyphs">24</text>
<line x1="0" y1="213.09999999999997" x2="20.5" y2="213.09999999999997" stroke="#8a8a8a" stroke-width="0.8"/>
<text x="10.3" y="225.49999999999994" font-size="11.0" fill="#ffffff" text-anchor="middle" textLength="11.4" lengthAdjust="spacingAndGlyphs">25</text>
<line x1="0" y1="227.79999999999995" x2="20.5" y2="227.79999999999995" stroke="#8a8a8a" stroke-width="0.8"/>
<text x="10.3" y="240.19999999999993" font-size="11.0" fill="#ffffff" text-anchor="middle" textLength="11.4" lengthAdjust="spacingAndGlyphs">26</text>
<line x1="0" y1="242.49999999999994" x2="20.5" y2="242.49999999999994" stroke="#8a8a8a" stroke-width="0.8"/>
<text x="10.3" y="254.89999999999992" font-size="11.0" fill="#ffffff" text-anchor="middle" textLength="11.4" lengthAdjust="spacingAndGlyphs">27</text>
<line x1="0" y1="257.19999999999993" x2="20.5" y2="257.19999999999993" stroke="#8a8a8a" stroke-width="0.8"/>
<text x="10.3" y="269.5999999999999" font-size="11.0" fill="#ffffff" text-anchor="middle" textLength="11.4" lengthAdjust="spacingAndGlyphs">28</text>
<line x1="0" y1="271.8999999999999" x2="20.5" y2="271.8999999999999" stroke="#8a8a8a" stroke-width="0.8"/>
<text x="10.3" y="294.9999999999999" font-size="11.0" fill="#ffffff" text-anchor="middle" textLength="11.4" lengthAdjust="spacingAndGlyphs">29</text>
<line x1="0" y1="297.2999999999999" x2="20.5" y2="297.2999999999999" stroke="#8a8a8a" stroke-width="0.8"/>
<text x="10.3" y="309.6999999999999" font-size="11.0" fill="#ffffff" text-anchor="middle" textLength="11.4" lengthAdjust="spacingAndGlyphs">30</text>
<line x1="0" y1="311.9999999999999" x2="20.5" y2="311.9999999999999" stroke="#8a8a8a" stroke-width="0.8"/>
<text x="10.3" y="324.39999999999986" font-size="11.0" fill="#ffffff" text-anchor="middle" textLength="11.4" lengthAdjust="spacingAndGlyphs">31</text>
<line x1="0" y1="326.6999999999999" x2="20.5" y2="326.6999999999999" stroke="#8a8a8a" stroke-width="0.8"/>
<text x="10.3" y="339.09999999999985" font-size="11.0" fill="#ffffff" text-anchor="middle" textLength="11.4" lengthAdjust="spacingAndGlyphs">32</text>
<line x1="0" y1="341.39999999999986" x2="20.5" y2="341.39999999999986" stroke="#8a8a8a" stroke-width="0.8"/>
<text x="10.3" y="353.79999999999984" font-size="11.0" fill="#ffffff" text-anchor="middle" textLength="11.4" lengthAdjust="spacingAndGlyphs">33</text>
<line x1="0" y1="356.09999999999985" x2="20.5" y2="356.09999999999985" stroke="#8a8a8a" stroke-width="0.8"/>
<text x="10.3" y="368.49999999999983" font-size="11.0" fill="#ffffff" text-anchor="middle" textLength="11.4" lengthAdjust="spacingAndGlyphs">34</text>
<line x1="0" y1="370.79999999999984" x2="20.5" y2="370.79999999999984" stroke="#8a8a8a" stroke-width="0.8"/>
<text x="10.3" y="383.1999999999998" font-size="11.0" fill="#ffffff" text-anchor="middle" textLength="11.4" lengthAdjust="spacingAndGlyphs">35</text>
<line x1="0" y1="385.49999999999983" x2="20.5" y2="385.49999999999983" stroke="#8a8a8a" stroke-width="0.8"/>
<text x="10.3" y="397.8999999999998" font-size="11.0" fill="#ffffff" text-anchor="middle" textLength="11.4" lengthAdjust="spacingAndGlyphs">36</text>
<line x1="0" y1="400.1999999999998" x2="20.5" y2="400.1999999999998" stroke="#8a8a8a" stroke-width="0.8"/>
<text x="10.3" y="412.5999999999998" font-size="11.0" fill="#ffffff" text-anchor="middle" textLength="11.4" lengthAdjust="spacingAndGlyphs">37</text>
<line x1="0" y1="414.8999999999998" x2="20.5" y2="414.8999999999998" stroke="#8a8a8a" stroke-width="0.8"/>
<text x="10.3" y="427.2999999999998" font-size="11.0" fill="#ffffff" text-anchor="middle" textLength="11.4" lengthAdjust="spacingAndGlyphs">38</text>
<line x1="0" y1="429.5999999999998" x2="20.5" y2="429.5999999999998" stroke="#8a8a8a" stroke-width="0.8"/>
<text x="10.3" y="441.9999999999998" font-size="11.0" fill="#ffffff" text-anchor="middle" textLength="11.4" lengthAdjust="spacingAndGlyphs">39</text>
<line x1="0" y1="444.2999999999998" x2="20.5" y2="444.2999999999998" stroke="#8a8a8a" stroke-width="0.8"/>
<text x="10.3" y="456.69999999999976" font-size="11.0" fill="#ffffff" text-anchor="middle" textLength="11.4" lengthAdjust="spacingAndGlyphs">40</text>
<line x1="0" y1="458.9999999999998" x2="20.5" y2="458.9999999999998" stroke="#8a8a8a" stroke-width="0.8"/>
<text x="10.3" y="482.09999999999974" font-size="11.0" fill="#ffffff" text-anchor="middle" textLength="11.4" lengthAdjust="spacingAndGlyphs">41</text>
<line x1="0" y1="484.39999999999975" x2="20.5" y2="484.39999999999975" stroke="#8a8a8a" stroke-width="0.8"/>
<text x="10.3" y="496.7999999999997" font-size="11.0" fill="#ffffff" text-anchor="middle" textLength="11.4" lengthAdjust="spacingAndGlyphs">42</text>
<line x1="0" y1="499.09999999999974" x2="20.5" y2="499.09999999999974" stroke="#8a8a8a" stroke-width="0.8"/>
<rect x="68.3" y="271.8999999999999" width="522.1" height="25.399999999999977" fill="#fff"/>
<line x1="68.3" y1="297.2999999999999" x2="590.4" y2="297.2999999999999" stroke="#4a4a4a" stroke-width="0.8"/>
<line x1="68.3" y1="311.9999999999999" x2="590.4" y2="311.9999999999999" stroke="#4a4a4a" stroke-width="0.8"/>
<line x1="68.3" y1="326.6999999999999" x2="590.4" y2="326.6999999999999" stroke="#4a4a4a" stroke-width="0.8"/>
<line x1="68.3" y1="341.39999999999986" x2="590.4" y2="341.39999999999986" stroke="#4a4a4a" stroke-width="0.8"/>
<line x1="68.3" y1="356.09999999999985" x2="590.4" y2="356.09999999999985" stroke="#4a4a4a" stroke-width="0.8"/>
<line x1="68.3" y1="370.79999999999984" x2="590.4" y2="370.79999999999984" stroke="#4a4a4a" stroke-width="0.8"/>
<line x1="68.3" y1="385.49999999999983" x2="590.4" y2="385.49999999999983" stroke="#4a4a4a" stroke-width="0.8"/>
<line x1="68.3" y1="400.1999999999998" x2="590.4" y2="400.1999999999998" stroke="#4a4a4a" stroke-width="0.8"/>
<line x1="68.3" y1="414.8999999999998" x2="590.4" y2="414.8999999999998" stroke="#4a4a4a" stroke-width="0.8"/>
<line x1="68.3" y1="429.5999999999998" x2="590.4" y2="429.5999999999998" stroke="#4a4a4a" stroke-width="0.8"/>
<line x1="68.3" y1="444.2999999999998" x2="590.4" y2="444.2999999999998" stroke="#4a4a4a" stroke-width="0.8"/>
<line x1="68.3" y1="458.9999999999998" x2="590.4" y2="458.9999999999998" stroke="#4a4a4a" stroke-width="0.8"/>
<line x1="68.3" y1="484.39999999999975" x2="590.4" y2="484.39999999999975" stroke="#4a4a4a" stroke-width="0.8"/>
<line x1="235.4" y1="297.2999999999999" x2="235.4" y2="499.09999999999974" stroke="#4a4a4a" stroke-width="0.8"/>
<line x1="383.3" y1="297.2999999999999" x2="383.3" y2="499.09999999999974" stroke="#4a4a4a" stroke-width="0.8"/>
<line x1="67.45" y1="271.69999999999993" x2="591.25" y2="271.69999999999993" stroke="#262626" stroke-width="1.7"/>
<line x1="68.3" y1="271.8999999999999" x2="68.3" y2="499.69999999999976" stroke="#262626" stroke-width="1.7"/>
<line x1="590.4" y1="271.8999999999999" x2="590.4" y2="500.7" stroke="#262626" stroke-width="1.7"/>
<line x1="68.3" y1="498.7999999999997" x2="383.7" y2="498.7999999999997" stroke="#262626" stroke-width="1.5"/>
<line x1="68.3" y1="297.2999999999999" x2="590.4" y2="297.2999999999999" stroke="#4a4a4a" stroke-width="1.1"/>
<text x="329.04999999999995" y="289.4" font-size="10.0" fill="#000" font-weight="bold" text-anchor="middle" textLength="155.5" lengthAdjust="spacingAndGlyphs">Подбор контакторов по формуле</text>
<text transform="translate(70.4 308.7999999999999) scale(0.965 1)" font-size="10.3" fill="#000" stroke="#000" stroke-width="0.2" font-style="italic">Конденсатор BZMJ 0.45-2-3</text>
<text x="381.8" y="308.7999999999999" font-size="10.3" fill="#000" stroke="#000" stroke-width="0.2" text-anchor="end">0</text>
<text transform="translate(385.9 308.7999999999999) scale(0.959 1)" font-size="10.3" fill="#000" stroke="#000" stroke-width="0.2" font-style="italic">Контактор CJ19-2511, 12кВАр, 1НО+1НЗ</text>
<text transform="translate(660.5 308.7999999999999) scale(0.955 1)" font-size="10.3" fill="#000" stroke="#000" stroke-width="0.2">Конденсатор BZMJ 0.45-2-3</text>
<text transform="translate(803.0 308.7999999999999) scale(0.955 1)" font-size="10.3" fill="#000" stroke="#000" stroke-width="0.2">0</text>
<text transform="translate(70.4 323.4999999999999) scale(0.965 1)" font-size="10.3" fill="#000" stroke="#000" stroke-width="0.2" font-style="italic">Конденсатор BZMJ 0.45-3-3</text>
<text x="381.8" y="323.4999999999999" font-size="10.3" fill="#000" stroke="#000" stroke-width="0.2" text-anchor="end">0</text>
<text transform="translate(385.9 323.4999999999999) scale(0.959 1)" font-size="10.3" fill="#000" stroke="#000" stroke-width="0.2" font-style="italic">Контактор CJ19-2511, 12кВАр, 1НО+1НЗ</text>
<text transform="translate(660.5 323.4999999999999) scale(0.955 1)" font-size="10.3" fill="#000" stroke="#000" stroke-width="0.2">Конденсатор BZMJ 0.45-3-3</text>
<text transform="translate(803.0 323.4999999999999) scale(0.955 1)" font-size="10.3" fill="#000" stroke="#000" stroke-width="0.2">0</text>
<text transform="translate(70.4 338.1999999999999) scale(0.965 1)" font-size="10.3" fill="#000" stroke="#000" stroke-width="0.2" font-style="italic">Конденсатор BZMJ 0.45-4-3</text>
<text x="381.8" y="338.1999999999999" font-size="10.3" fill="#000" stroke="#000" stroke-width="0.2" text-anchor="end">0</text>
<text transform="translate(385.9 338.1999999999999) scale(0.959 1)" font-size="10.3" fill="#000" stroke="#000" stroke-width="0.2" font-style="italic">Контактор CJ19-2511, 12кВАр, 1НО+1НЗ</text>
<text transform="translate(660.5 338.1999999999999) scale(0.955 1)" font-size="10.3" fill="#000" stroke="#000" stroke-width="0.2">Конденсатор BZMJ 0.45-4-3</text>
<text transform="translate(803.0 338.1999999999999) scale(0.955 1)" font-size="10.3" fill="#000" stroke="#000" stroke-width="0.2">0</text>
<text transform="translate(70.4 352.89999999999986) scale(0.965 1)" font-size="10.3" fill="#000" stroke="#000" stroke-width="0.2" font-style="italic">Конденсатор BZMJ 0.45-5-3</text>
<text transform="translate(237.3 352.89999999999986) scale(0.965 1)" font-size="10.3" fill="#000" stroke="#000" stroke-width="0.2" font-style="italic">Конденсатор NWC6-0.4-5-3</text>
<text transform="translate(385.9 352.89999999999986) scale(0.959 1)" font-size="10.3" fill="#000" stroke="#000" stroke-width="0.2" font-style="italic">Контактор CJ19-2511, 12кВАр, 1НО+1НЗ</text>
<text transform="translate(660.5 352.89999999999986) scale(0.955 1)" font-size="10.3" fill="#000" stroke="#000" stroke-width="0.2">Конденсатор BZMJ 0.45-5-3</text>
<text transform="translate(803.0 352.89999999999986) scale(0.955 1)" font-size="10.3" fill="#000" stroke="#000" stroke-width="0.2">Конденсатор NWC6-0.4-5-3</text>
<text transform="translate(70.4 367.59999999999985) scale(0.965 1)" font-size="10.3" fill="#000" stroke="#000" stroke-width="0.2" font-style="italic">Конденсатор BZMJ 0.45-7.5-3</text>
<text transform="translate(237.3 367.59999999999985) scale(0.965 1)" font-size="10.3" fill="#000" stroke="#000" stroke-width="0.2" font-style="italic">Конденсатор NWC6-0.4-7,5-3</text>
<text transform="translate(385.9 367.59999999999985) scale(0.959 1)" font-size="10.3" fill="#000" stroke="#000" stroke-width="0.2" font-style="italic">Контактор CJ19-2511, 12кВАр, 1НО+1НЗ</text>
<text transform="translate(660.5 367.59999999999985) scale(0.955 1)" font-size="10.3" fill="#000" stroke="#000" stroke-width="0.2">Конденсатор BZMJ 0.45-7.5-3</text>
<text transform="translate(803.0 367.59999999999985) scale(0.955 1)" font-size="10.3" fill="#000" stroke="#000" stroke-width="0.2">Конденсатор NWC6-0.4-7,5-3</text>
<text transform="translate(70.4 382.29999999999984) scale(0.965 1)" font-size="10.3" fill="#000" stroke="#000" stroke-width="0.2" font-style="italic">Конденсатор BZMJ0.45-10-3</text>
<text transform="translate(237.3 382.29999999999984) scale(0.965 1)" font-size="10.3" fill="#000" stroke="#000" stroke-width="0.2" font-style="italic">Конденсатор NWC6-0.4-10-3</text>
<text transform="translate(385.9 382.29999999999984) scale(0.959 1)" font-size="10.3" fill="#000" stroke="#000" stroke-width="0.2" font-style="italic">Контактор CJ19-2511, 12кВАр, 1НО+1НЗ</text>
<text transform="translate(660.5 382.29999999999984) scale(0.955 1)" font-size="10.3" fill="#000" stroke="#000" stroke-width="0.2">Конденсатор BZMJ0.45-10-3</text>
<text transform="translate(803.0 382.29999999999984) scale(0.955 1)" font-size="10.3" fill="#000" stroke="#000" stroke-width="0.2">Конденсатор NWC6-0.4-10-3</text>
<text transform="translate(70.4 396.99999999999983) scale(0.965 1)" font-size="10.3" fill="#000" stroke="#000" stroke-width="0.2" font-style="italic">Конденсатор BZMJ0.45-15-3</text>
<text transform="translate(237.3 396.99999999999983) scale(0.965 1)" font-size="10.3" fill="#000" stroke="#000" stroke-width="0.2" font-style="italic">Конденсатор NWC6-0.4-15-3</text>
<text transform="translate(385.9 396.99999999999983) scale(0.959 1)" font-size="10.3" fill="#000" stroke="#000" stroke-width="0.2" font-style="italic">Контактор CJ19-3211, 18кВАр, 1НО+1НЗ</text>
<text transform="translate(660.5 396.99999999999983) scale(0.955 1)" font-size="10.3" fill="#000" stroke="#000" stroke-width="0.2">Конденсатор BZMJ0.45-15-3</text>
<text transform="translate(803.0 396.99999999999983) scale(0.955 1)" font-size="10.3" fill="#000" stroke="#000" stroke-width="0.2">Конденсатор NWC6-0.4-15-3</text>
<text transform="translate(70.4 411.6999999999998) scale(0.965 1)" font-size="10.3" fill="#000" stroke="#000" stroke-width="0.2" font-style="italic">Конденсатор BZMJ0.45-20-3</text>
<text transform="translate(237.3 411.6999999999998) scale(0.965 1)" font-size="10.3" fill="#000" stroke="#000" stroke-width="0.2" font-style="italic">Конденсатор NWC6-0.4-20-3</text>
<text transform="translate(385.9 411.6999999999998) scale(0.959 1)" font-size="10.3" fill="#000" stroke="#000" stroke-width="0.2" font-style="italic">Контактор CJ19-4311, 20кВАр, 1НО+1НЗ</text>
<text transform="translate(660.5 411.6999999999998) scale(0.955 1)" font-size="10.3" fill="#000" stroke="#000" stroke-width="0.2">Конденсатор BZMJ0.45-20-3</text>
<text transform="translate(803.0 411.6999999999998) scale(0.955 1)" font-size="10.3" fill="#000" stroke="#000" stroke-width="0.2">Конденсатор NWC6-0.4-20-3</text>
<text transform="translate(70.4 426.3999999999998) scale(0.965 1)" font-size="10.3" fill="#000" stroke="#000" stroke-width="0.2" font-style="italic">Конденсатор BZMJ0.45-25-3</text>
<text transform="translate(237.3 426.3999999999998) scale(0.965 1)" font-size="10.3" fill="#000" stroke="#000" stroke-width="0.2" font-style="italic">Конденсатор NWC6-0.4-25-3</text>
<text transform="translate(385.9 426.3999999999998) scale(0.959 1)" font-size="10.3" fill="#000" stroke="#000" stroke-width="0.2" font-style="italic">Контактор CJ19-6312, 30кВАр, 1НО+2НЗ</text>
<text transform="translate(660.5 426.3999999999998) scale(0.955 1)" font-size="10.3" fill="#000" stroke="#000" stroke-width="0.2">Конденсатор BZMJ0.45-25-3</text>
<text transform="translate(803.0 426.3999999999998) scale(0.955 1)" font-size="10.3" fill="#000" stroke="#000" stroke-width="0.2">Конденсатор NWC6-0.4-25-3</text>
<text transform="translate(70.4 441.0999999999998) scale(0.965 1)" font-size="10.3" fill="#000" stroke="#000" stroke-width="0.2" font-style="italic">Конденсатор BZMJ0.45-30-3</text>
<text transform="translate(237.3 441.0999999999998) scale(0.965 1)" font-size="10.3" fill="#000" stroke="#000" stroke-width="0.2" font-style="italic">Конденсатор NWC6-0.4-30-3</text>
<text transform="translate(385.9 441.0999999999998) scale(0.959 1)" font-size="10.3" fill="#000" stroke="#000" stroke-width="0.2" font-style="italic">Контактор CJ19-6312, 30кВАр, 1НО+2НЗ</text>
<text transform="translate(660.5 441.0999999999998) scale(0.955 1)" font-size="10.3" fill="#000" stroke="#000" stroke-width="0.2">Конденсатор BZMJ0.45-30-3</text>
<text transform="translate(803.0 441.0999999999998) scale(0.955 1)" font-size="10.3" fill="#000" stroke="#000" stroke-width="0.2">Конденсатор NWC6-0.4-30-3</text>
<text transform="translate(70.4 455.7999999999998) scale(0.965 1)" font-size="10.3" fill="#000" stroke="#000" stroke-width="0.2" font-style="italic">Конденсатор BZMJ0.45-40-3</text>
<text x="381.8" y="455.7999999999998" font-size="10.3" fill="#000" stroke="#000" stroke-width="0.2" text-anchor="end">0</text>
<text transform="translate(385.9 455.7999999999998) scale(0.959 1)" font-size="10.3" fill="#000" stroke="#000" stroke-width="0.2" font-style="italic">Контактор CJ19-9512, 50кВАр, 1НО+2НЗ</text>
<text transform="translate(660.5 455.7999999999998) scale(0.955 1)" font-size="10.3" fill="#000" stroke="#000" stroke-width="0.2">Конденсатор BZMJ0.45-40-3</text>
<text transform="translate(803.0 455.7999999999998) scale(0.955 1)" font-size="10.3" fill="#000" stroke="#000" stroke-width="0.2">0</text>
<text transform="translate(70.4 475.59999999999974) scale(0.965 1)" font-size="10.3" fill="#000" stroke="#000" stroke-width="0.2" font-style="italic">Конденсатор BZMJ0.45-50-3</text>
<text x="381.8" y="475.59999999999974" font-size="10.3" fill="#000" stroke="#000" stroke-width="0.2" text-anchor="end">0</text>
<text transform="translate(385.9 475.59999999999974) scale(0.959 1)" font-size="10.3" fill="#000" stroke="#000" stroke-width="0.2" font-style="italic">Контактор CJ19-9521, 50кВАр, 1НО+2НЗ</text>
<text transform="translate(660.5 475.59999999999974) scale(0.955 1)" font-size="10.3" fill="#000" stroke="#000" stroke-width="0.2">Конденсатор BZMJ0.45-50-3</text>
<text transform="translate(803.0 475.59999999999974) scale(0.955 1)" font-size="10.3" fill="#000" stroke="#000" stroke-width="0.2">0</text>
<text transform="translate(70.4 495.89999999999975) scale(0.965 1)" font-size="10.3" fill="#000" stroke="#000" stroke-width="0.2" font-style="italic">Конденсатор BZMJ0.45-60-3</text>
<text x="381.8" y="495.89999999999975" font-size="10.3" fill="#000" stroke="#000" stroke-width="0.2" text-anchor="end">0</text>
<text x="385.9" y="495.89999999999975" font-size="10.3" fill="#000" stroke="#000" stroke-width="0.2" font-style="italic" textLength="115.4" lengthAdjust="spacingAndGlyphs">Контактор CJ19-115/10</text>
<text transform="translate(660.5 495.89999999999975) scale(0.955 1)" font-size="10.3" fill="#000" stroke="#000" stroke-width="0.2">Конденсатор BZMJ0.45-60-3</text>
<text transform="translate(803.0 495.89999999999975) scale(0.955 1)" font-size="10.3" fill="#000" stroke="#000" stroke-width="0.2">0</text>
<rect x="383.3" y="183.7" width="207.09999999999997" height="14.699999999999989" fill="#fff" stroke="#1e7c45" stroke-width="1.4"/>
<rect x="588.6" y="196.59999999999997" width="3.2" height="3.2" fill="#1e7c45" stroke="#fff" stroke-width="0.6"/>
<path d="M384.0 184.39999999999998 h3 l-3 3 Z" fill="#1e7c45" />
<text x="487.25" y="194.7" font-size="10.2" fill="#000" stroke="#000" stroke-width="0.12" text-anchor="middle" textLength="24.2" lengthAdjust="spacingAndGlyphs">#Н/Д</text>
<rect x="362" y="184.2" width="13" height="13" fill="#d9d9d9" rx="1" stroke="#bdbdbd" stroke-width="0.6"/>
<path d="M368.5 185.8 L373.6 195.2 L363.4 195.2 Z" fill="#f0b323" stroke="#7a5a00" stroke-width="0.6" stroke-linejoin="round"/>
<text x="368.5" y="194.4" font-size="7.5" fill="#000" font-weight="bold" text-anchor="middle">!</text>
<text x="20.8" y="496.2" font-size="10.4" fill="#d6d6d6">ки</text>
<rect x="985.9" y="140.5" width="13.100000000000023" height="360.2" fill="#505050"/>
<rect x="987.4" y="141.4" width="11.2" height="361.2" fill="#3a3a3a" rx="4.5"/>
<path d="M992.5 143.8 L995.4 148.2 L989.6 148.2 Z" fill="#e8e8e8" />
<path d="M992.6 499.4 L995.4 495.4 L989.8 495.4 Z" fill="#e8e8e8" />
<rect x="989.8" y="232.2" width="5.4" height="92.4" fill="#c4c4c4" rx="2.7"/>
</g>
<g id="sheettabs">
<rect x="0" y="500.7" width="999" height="20.5" fill="#4b4b4b"/>
<path d="M20.4 508.0 l-3.2 3.1 l3.2 3.1" fill="none" stroke="#9a9a9a" stroke-width="0.9" stroke-linecap="round" stroke-linejoin="round"/>
<path d="M38.2 508.0 l3.2 3.1 l-3.2 3.1" fill="none" stroke="#9a9a9a" stroke-width="0.9" stroke-linecap="round" stroke-linejoin="round"/>
<text x="80.2" y="515.7" font-size="9.2" fill="#ececec" textLength="21.8" lengthAdjust="spacingAndGlyphs">БАЗА</text>
<line x1="109.6" y1="505.4" x2="109.6" y2="517.6" stroke="#7e7e7e" stroke-width="0.8"/>
<path d="M112.4 501.3 v13.8 a4 4 0 0 0 4 4 h44.8 a4 4 0 0 0 4 -4 v-13.8 Z" fill="#ffffff" />
<text x="117.6" y="513.7" font-size="9.9" fill="#1a1a1a" stroke="#1a1a1a" stroke-width="0.2" textLength="41.4" lengthAdjust="spacingAndGlyphs">Формулы</text>
<rect x="117.4" y="516.0" width="41.8" height="1.4" fill="#217346"/>
<text x="177.4" y="515.4" font-size="9.4" fill="#ececec" textLength="65.4" lengthAdjust="spacingAndGlyphs">Расчётный лист</text>
<line x1="250.6" y1="505.4" x2="250.6" y2="517.6" stroke="#7e7e7e" stroke-width="0.8"/>
<path d="M277.6 511.0 h7.6 M281.4 507.2 v7.6" fill="none" stroke="#e6e6e6" stroke-width="0.9" stroke-linecap="round"/>
<circle cx="601.4" cy="508.8" r="0.8" fill="#ececec"/>
<circle cx="601.4" cy="511.3" r="0.8" fill="#ececec"/>
<circle cx="601.4" cy="513.8" r="0.8" fill="#ececec"/>
<rect x="611.6" y="506.4" width="375.0" height="9.8" fill="#383838" rx="4.9"/>
<path d="M614.6 511.4 l5.2 -3.1 v6.2 Z" fill="#ececec" />
<path d="M984.2 511.4 l-5.2 -3.1 v6.2 Z" fill="#ececec" />
<rect x="800.4" y="508.7" width="175.4" height="5.4" fill="#c4c4c4" rx="2.7"/>
</g>
<g id="statusbar">
<rect x="0" y="521.0" width="999" height="15.6" fill="#525252"/>
<line x1="0" y1="521.5" x2="999" y2="521.5" stroke="#414141" stroke-width="1.2"/>
<text x="7.4" y="532.4" font-size="7.4" fill="#e6e6e6" textLength="22.2" lengthAdjust="spacingAndGlyphs">Готово</text>
<path d="M49.0 525.8 a1.1 1.1 0 1 1 0.1 0 M45.8 527.8 h6.4 M49.0 527.8 v2.8 l-2.2 3.2 M49.0 530.6 l1.2 1.6 M51.2 531.4 l2.6 2.6 M53.8 531.4 l-2.6 2.6 M46.0 526.2 l-1.2 -1.2" fill="none" stroke="#f0f0f0" stroke-width="0.8" stroke-linecap="round"/>
<text x="56.6" y="532.4" font-size="7.3" fill="#f6f6f6" font-weight="bold" textLength="182.6" lengthAdjust="spacingAndGlyphs">Специальные возможности: проверьте рекомендации</text>
<rect x="804.2" y="522.0" width="25.4" height="14.2" fill="#646464"/>
<rect x="811.6" y="525.0" width="9.0" height="8.4" fill="none" rx="0.4" stroke="#f0f0f0" stroke-width="0.8"/>
<line x1="811.6" y1="527.8" x2="820.6" y2="527.8" stroke="#f0f0f0" stroke-width="0.7"/>
<line x1="811.6" y1="530.6" x2="820.6" y2="530.6" stroke="#f0f0f0" stroke-width="0.7"/>
<line x1="814.6" y1="525.0" x2="814.6" y2="533.4" stroke="#f0f0f0" stroke-width="0.7"/>
<line x1="817.6" y1="525.0" x2="817.6" y2="533.4" stroke="#f0f0f0" stroke-width="0.7"/>
<rect x="837.8" y="525.0" width="9.0" height="8.4" fill="none" rx="0.4" stroke="#f0f0f0" stroke-width="0.8"/>
<rect x="840.0" y="526.8" width="4.6" height="4.8" fill="none" rx="0.2" stroke="#f0f0f0" stroke-width="0.7"/>
<rect x="863.8" y="525.0" width="9.0" height="8.4" fill="none" rx="0.4" stroke="#f0f0f0" stroke-width="0.8"/>
<path d="M866.0 525.0 v4.0 h4.6 v-4.0" fill="none" stroke="#f0f0f0" stroke-width="0.7" />
<line x1="885.4" y1="529.2" x2="889.8" y2="529.2" stroke="#e0e0e0" stroke-width="0.8"/>
<line x1="893.6" y1="529.2" x2="958.4" y2="529.2" stroke="#9a9a9a" stroke-width="0.7"/>
<rect x="926.0" y="525.2" width="3.0" height="8.2" fill="#dcdcdc" rx="0.6"/>
<path d="M961.9 529.2 h4.4 M964.1 527.0 v4.4" fill="none" stroke="#e0e0e0" stroke-width="0.8" />
<text x="975.9" y="532.0" font-size="7.4" fill="#f0f0f0" textLength="17.7" lengthAdjust="spacingAndGlyphs">115 %</text>
</g>
<g id="taskbar">
<rect x="0" y="536.4" width="999" height="25.6" fill="#1c1c1c"/>
<rect x="10.2" y="544.2" width="5.0" height="4.8" fill="#ffffff"/>
<rect x="15.9" y="544.2" width="5.0" height="4.8" fill="#ffffff"/>
<rect x="10.2" y="549.7" width="5.0" height="4.8" fill="#ffffff"/>
<rect x="15.9" y="549.7" width="5.0" height="4.8" fill="#ffffff"/>
<rect x="31.4" y="537.2" width="186.2" height="24.8" fill="#2c2c2c" stroke="#3c3c3c" stroke-width="0.7"/>
<circle cx="46.6" cy="547.4" r="3.2" fill="none" stroke="#e6e6e6" stroke-width="0.9"/>
<line x1="44.4" y1="549.8" x2="39.6" y2="554.4" stroke="#e6e6e6" stroke-width="0.9" stroke-linecap="round"/>
<text x="57.6" y="552.8" font-size="9.8" fill="#e2e2e2" textLength="28.2" lengthAdjust="spacingAndGlyphs">Поиск</text>
<clipPath id="tbc"><rect x="150" y="537.2" width="67.6" height="24.8"/></clipPath>
<g clip-path="url(#tbc)"><ellipse cx="192.6" cy="568.6" rx="27" ry="12.2" fill="#55a14c"/><ellipse cx="192.6" cy="570.6" rx="22" ry="11.0" fill="#7cc06a"/><rect x="178.0" y="557.4" width="29.6" height="5" fill="#d8c4cf"/><rect x="180.8" y="550.2" width="24.4" height="8" fill="#dccad6"/><rect x="187.6" y="546.6" width="10.8" height="12" fill="#e4d4dd"/><path d="M183.2 550.4 c-0.4 -3.0 0.8 -4.6 2.4 -5.8 c1.6 1.2 2.8 2.8 2.4 5.8 Z" fill="#d3bfcd"/><path d="M197.8 550.4 c-0.4 -3.0 0.8 -4.6 2.4 -5.8 c1.6 1.2 2.8 2.8 2.4 5.8 Z" fill="#d3bfcd"/><rect x="185.1" y="542.4" width="1.2" height="2.4" fill="#cdb7c6"/><rect x="199.7" y="542.4" width="1.2" height="2.4" fill="#cdb7c6"/><path d="M189.8 547.4 c-0.5 -3.8 1.0 -5.8 3.2 -7.4 c2.2 1.6 3.7 3.6 3.2 7.4 Z" fill="#e2d2dc"/><rect x="192.2" y="537.6" width="1.7" height="3.2" rx="0.6" fill="#d9c7d3"/><path d="M193.0 539.8 c1.6 1.8 3.2 3.0 3.2 7.6 h-1.6 c0 -3.6 -0.6 -5.6 -1.6 -7.6Z" fill="#b7a0b6"/><rect x="203.0" y="550.2" width="2.2" height="12" fill="#bfa9bd"/><rect x="205.6" y="557.4" width="2.0" height="5" fill="#b7a0b6"/><circle cx="185.4" cy="553.4" r="0.7" fill="#3a3f6e"/><circle cx="200.4" cy="553.4" r="0.7" fill="#3a3f6e"/><rect x="190.0" y="552.0" width="1.0" height="2.2" fill="#3a3f6e"/><rect x="192.5" y="552.0" width="1.0" height="2.2" fill="#3a3f6e"/><rect x="195.0" y="552.0" width="1.0" height="2.2" fill="#3a3f6e"/><rect x="190.0" y="555.4" width="1.0" height="1.6" fill="#6d5f88"/><rect x="192.5" y="555.4" width="1.0" height="1.6" fill="#6d5f88"/><rect x="195.0" y="555.4" width="1.0" height="1.6" fill="#6d5f88"/><path d="M180.8 562 v-1.6 a2.6 2.0 0 0 1 5.2 0 v1.6 Z M189.4 562 v-1.8 a3.4 2.2 0 0 1 6.8 0 v1.8 Z M199.2 562 v-1.6 a2.6 2.0 0 0 1 5.2 0 v1.6 Z" fill="#5d4a78"/></g>
<circle cx="236.0" cy="549.0" r="7.3" fill="#2aa3de"/>
<path d="M231.2 549.0 l9.0 -3.6 l-1.6 7.4 l-2.9 -2.0 l-1.4 1.4 l-0.2 -2.3 Z" fill="#ffffff" />
<circle cx="268.4" cy="549.0" r="7.6" fill="#1877f2"/>
<text x="269.4" y="556.0" font-size="13.5" fill="#fff" font-weight="bold" text-anchor="middle">f</text>
<rect x="293.0" y="541.4" width="15.6" height="15.0" fill="#0f6cbd"/>
<rect x="297.6" y="545.7" width="6.4" height="6.4" fill="none" rx="1.8" stroke="#fff" stroke-width="0.8"/>
<circle cx="300.8" cy="548.9" r="1.5" fill="none" stroke="#fff" stroke-width="0.7"/>
<rect x="326.2" y="542.4" width="13.4" height="13.4" fill="#0a66c2" rx="1.2"/>
<text x="332.9" y="553.4" font-size="9.6" fill="#fff" font-weight="bold" text-anchor="middle">in</text>
<circle cx="365.0" cy="548.2" r="7.8" fill="#2d6cf0"/>
<text x="365.0" y="550.6" font-size="7.0" fill="#fff" font-weight="bold" text-anchor="middle">zm</text>
<rect x="389.6" y="541.2" width="15.2" height="15.2" fill="#3b4fc4" rx="1"/>
<rect x="392.6" y="541.2" width="8.4" height="5.0" fill="#dfe3ff"/>
<rect x="397.6" y="542.0" width="2.0" height="3.2" fill="#3b4fc4"/>
<rect x="391.4" y="548.4" width="11.6" height="8.0" fill="#f3f3f3"/>
<line x1="392.4" y1="550.6" x2="402.0" y2="550.6" stroke="#d43a3a" stroke-width="1.0"/>
<line x1="392.4" y1="553.0" x2="402.0" y2="553.0" stroke="#d43a3a" stroke-width="1.0"/>
<line x1="392.4" y1="555.2" x2="402.0" y2="555.2" stroke="#d43a3a" stroke-width="0.8"/>
<circle cx="429.6" cy="549.0" r="7.6" fill="#1f8fd0"/>
<path d="M422.2 550.6 c0.4 -6.2 7.2 -9.8 12.2 -6.6 c2.4 1.4 3.0 3.8 2.6 5.4 c-1.8 -3.4 -7.8 -3.8 -9.8 0.4 c-1.4 3.4 0.8 6.2 3.6 7.0 c-4.2 0.8 -8.8 -1.8 -8.6 -6.2 Z" fill="#45d6b0" />
<circle cx="426.6" cy="553.4" r="3.2" fill="#e9d9cf"/>
<rect x="416.8" y="560.0" width="27.0" height="2.0" fill="#76b9ed"/>
<circle cx="461.6" cy="548.2" r="7.2" fill="#e8453c"/>
<path d="M461.6 548.2 L455.4 551.8 A7.2 7.2 0 0 0 465.2 554.4 Z" fill="#34a853" />
<path d="M461.6 548.2 L465.2 554.4 A7.2 7.2 0 0 0 467.9 544.6 Z" fill="#fbbc05" />
<circle cx="461.6" cy="548.2" r="3.0" fill="#4285f4" stroke="#fff" stroke-width="0.8"/>
<circle cx="465.8" cy="552.6" r="4.2" fill="#1a5fc8"/>
<text x="465.8" y="554.6" font-size="5.4" fill="#fff" font-weight="bold" text-anchor="middle">E</text>
<rect x="448.8" y="560.0" width="27.0" height="2.0" fill="#76b9ed"/>
<path d="M487.0 542.6 h5.0 l1.6 1.8 h7.6 v10.6 h-14.2 Z" fill="#f5c64a" />
<rect x="487.0" y="546.6" width="14.2" height="8.4" fill="#fadb7b"/>
<rect x="490.4" y="550.6" width="7.4" height="4.4" fill="#3d8fe0"/>
<rect x="518.8" y="543.2" width="15.6" height="11.2" fill="#f40f0f" rx="3.2"/>
<path d="M524.4 546.0 l5.0 2.8 l-5.0 2.8 Z" fill="#ffffff" />
<rect x="513.8" y="560.0" width="25.8" height="2.0" fill="#76b9ed"/>
<rect x="543.0" y="536.4" width="32.2" height="25.6" fill="#3e3e3e"/>
<rect x="554.6" y="542.2" width="12.4" height="13.4" fill="#21a366" rx="1.2"/>
<rect x="554.6" y="542.2" width="12.4" height="4.4" fill="#33c481" rx="1.2"/>
<rect x="554.6" y="551.2" width="12.4" height="4.4" fill="#107c41" rx="1.2"/>
<rect x="550.8" y="545.0" width="8.2" height="8.2" fill="#0f7a3f" rx="0.9"/>
<text x="554.9" y="551.8" font-size="6.8" fill="#fff" font-weight="bold" text-anchor="middle">X</text>
<rect x="543.0" y="560.0" width="32.2" height="2.0" fill="#76b9ed"/>
<circle cx="591.2" cy="549.0" r="6.8" fill="none" stroke="#f0f0f0" stroke-width="1.5"/>
<circle cx="591.2" cy="549.0" r="2.3" fill="none" stroke="#f0f0f0" stroke-width="1.4"/>
<path d="M591.2 542.2 l3.6 -1.4" fill="none" stroke="#f0f0f0" stroke-width="1.3" stroke-linecap="round"/>
<rect x="578.0" y="560.0" width="27.4" height="2.0" fill="#76b9ed"/>
<path d="M838.6 551.4 l3.6 -3.6 l3.6 3.6" fill="none" stroke="#f0f0f0" stroke-width="0.9" stroke-linecap="round" stroke-linejoin="round"/>
<rect x="854.6" y="545.0" width="4.2" height="6.2" fill="none" rx="0.8" stroke="#f0f0f0" stroke-width="0.8"/>
<path d="M856.7 551.2 v2.0 M854.8 553.4 h3.8 M860.2 546.6 v3.6 h1.4 v-3.6 Z" fill="none" stroke="#f0f0f0" stroke-width="0.7" />
<path d="M868.2 547.6 h1.8 l2.4 -2.2 v7.2 l-2.4 -2.2 h-1.8 Z" fill="none" stroke="#f0f0f0" stroke-width="0.8" stroke-linejoin="round"/>
<path d="M874.2 546.8 c1.2 1.2 1.2 3.2 0 4.4 M875.8 545.4 c2.0 2.0 2.0 5.2 0 7.2" fill="none" stroke="#cfcfcf" stroke-width="0.7" stroke-linecap="round"/>
<path d="M892.4 553.0 a0.6 0.6 0 1 1 0.1 0 M890.2 553.2 a2.6 2.6 0 0 1 2.6 -2.6 M887.6 553.2 a5.2 5.2 0 0 1 5.2 -5.2 M885.0 553.2 a7.8 7.8 0 0 1 7.8 -7.8" fill="none" stroke="#e0e0e0" stroke-width="0.9" stroke-linecap="round"/>
<line x1="995.6" y1="537" x2="995.6" y2="562" stroke="#3a3a3a" stroke-width="0.7"/>
<text x="901.6" y="552.0" font-size="8.2" fill="#f4f4f4" textLength="13.4" lengthAdjust="spacingAndGlyphs">РУС</text>
<text x="933.6" y="546.0" font-size="8.2" fill="#f4f4f4" textLength="17.2" lengthAdjust="spacingAndGlyphs">14:18</text>
<text x="924.6" y="557.8" font-size="8.2" fill="#f4f4f4" textLength="35.8" lengthAdjust="spacingAndGlyphs">28.08.2024</text>
<path d="M972.4 543.8 h10.6 v8.0 h-4.0 l-1.3 2.0 l-1.3 -2.0 h-4.0 Z" fill="#f4f4f4" />
<line x1="974.4" y1="546.2" x2="981.0" y2="546.2" stroke="#1c1c1c" stroke-width="0.6"/>
<line x1="974.4" y1="548.0" x2="981.0" y2="548.0" stroke="#1c1c1c" stroke-width="0.6"/>
<line x1="974.4" y1="549.8" x2="979.0" y2="549.8" stroke="#1c1c1c" stroke-width="0.6"/>
</g>
<g id="watermark">
<text x="756.0" y="496.8" font-size="9.6" fill="#9a9a9a" opacity="0.6" textLength="65.0" lengthAdjust="spacingAndGlyphs">Активация Windows</text>
<text x="724.8" y="507.6" font-size="7.7" fill="#d0d0d0" opacity="0.6" textLength="234.0" lengthAdjust="spacingAndGlyphs">Чтобы активировать Windows, перейдите в раздел "Параметры".</text>
</g>
</svg>
</div>
</body>
</html>
